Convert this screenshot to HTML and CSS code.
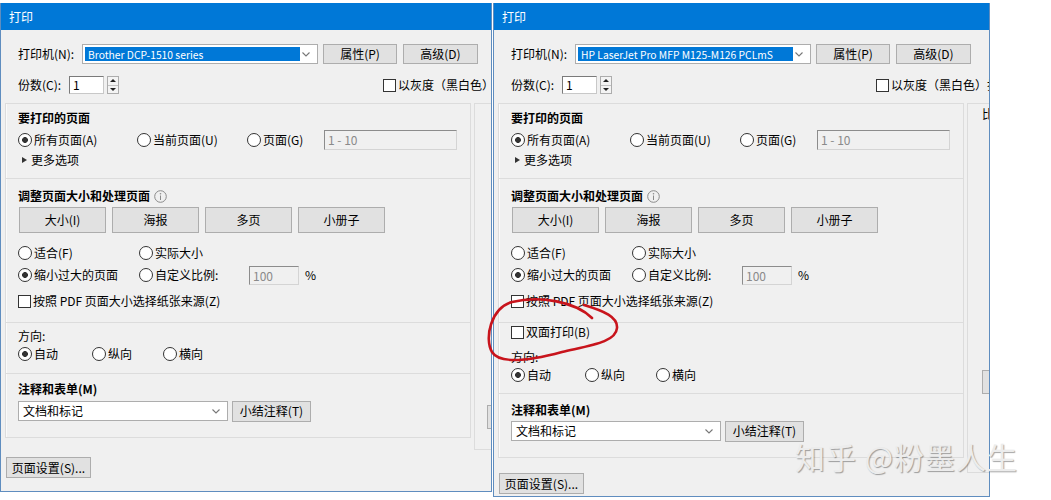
FILE: index.html
```html
<!doctype html>
<html lang="zh-CN">
  <head>
    <meta charset="UTF-8" />
    <meta name="viewport" content="width=device-width, initial-scale=1.0" />
    <title>打印</title>
    <link rel="stylesheet" href="styles.css">
  </head>
  <body>
    <div class="screen">
      <!-- 第一个打印对话框 -->
      <section class="dialog dialog-a">
        <header class="titlebar">打印</header>

        <div class="printer-row">
          <span class="lbl lbl-printer">打印机(N):</span>
          <div class="select select-printer">
            <span class="selected">Brother DCP-1510 series</span>
            <svg class="chev" width="8" height="5" viewBox="0 0 8 5"><polyline points="0.5,0.5 4,4 7.5,0.5" /></svg>
          </div>
          <button class="btn btn-prop">属性(P)</button>
          <button class="btn btn-adv">高级(D)</button>
        </div>

        <div class="copies-row">
          <span class="lbl lbl-copies">份数(C):</span>
          <span class="num-input">1</span>
          <span class="spin"><i class="up"></i><i class="down"></i></span>
          <span class="check gray-check"><b class="box"></b>以灰度（黑白色）打</span>
        </div>

        <div class="panels">
          <div class="sections">
            <div class="group g-pages">
              <div class="heading">要打印的页面</div>
              <div class="row">
                <span class="radio on w119">所有页面(A)</span>
                <span class="radio w110">当前页面(U)</span>
                <span class="radio w77">页面(G)</span>
                <span class="field off range">1 - 10</span>
              </div>
              <div class="row more">更多选项</div>
            </div>

            <div class="group g-size">
              <div class="heading">调整页面大小和处理页面
                <svg class="info" width="13" height="13" viewBox="0 0 13 13"><circle cx="6.5" cy="6.5" r="5.8" /><line x1="6.5" y1="5.5" x2="6.5" y2="10" /><circle class="dot" cx="6.5" cy="3.7" r="0.8" /></svg>
              </div>
              <div class="tabs">
                <button class="btn tab">大小(I)</button>
                <button class="btn tab">海报</button>
                <button class="btn tab">多页</button>
                <button class="btn tab">小册子</button>
              </div>
              <div class="row r-fit">
                <span class="radio w121">适合(F)</span>
                <span class="radio">实际大小</span>
              </div>
              <div class="row r-shrink">
                <span class="radio on w121">缩小过大的页面</span>
                <span class="radio w110">自定义比例:</span>
                <span class="field off scale">100</span>
                <span class="pct">%</span>
              </div>
              <div class="row r-source">
                <span class="check"><b class="box"></b>按照 PDF 页面大小选择纸张来源(Z)</span>
              </div>
            </div>

            <div class="group g-orient">
              <div class="line">方向:</div>
              <div class="line">
                <span class="radio on w74">自动</span>
                <span class="radio w71">纵向</span>
                <span class="radio">横向</span>
              </div>
            </div>

            <div class="group g-notes">
              <div class="heading">注释和表单(M)</div>
              <div class="row notes-row">
                <div class="select select-notes">
                  <span>文档和标记</span>
                  <svg class="chev" width="8" height="5" viewBox="0 0 8 5"><polyline points="0.5,0.5 4,4 7.5,0.5" /></svg>
                </div>
                <button class="btn btn-sum">小结注释(T)</button>
              </div>
            </div>
          </div>

          <div class="preview">
            <span class="preview-btn"></span>
          </div>
        </div>

        <div class="footer">
          <button class="btn btn-setup">页面设置(S)...</button>
        </div>
      </section>

      <!-- 第二个打印对话框，多了双面打印 -->
      <section class="dialog dialog-b">
        <header class="titlebar">打印</header>

        <div class="printer-row">
          <span class="lbl lbl-printer">打印机(N):</span>
          <div class="select select-printer">
            <span class="selected">HP LaserJet Pro MFP M125-M126 PCLmS</span>
            <svg class="chev" width="8" height="5" viewBox="0 0 8 5"><polyline points="0.5,0.5 4,4 7.5,0.5" /></svg>
          </div>
          <button class="btn btn-prop">属性(P)</button>
          <button class="btn btn-adv">高级(D)</button>
        </div>

        <div class="copies-row">
          <span class="lbl lbl-copies">份数(C):</span>
          <span class="num-input">1</span>
          <span class="spin"><i class="up"></i><i class="down"></i></span>
          <span class="check gray-check"><b class="box"></b>以灰度（黑白色）打印(Y)</span>
        </div>

        <div class="panels">
          <div class="sections">
            <div class="group g-pages">
              <div class="heading">要打印的页面</div>
              <div class="row">
                <span class="radio on w119">所有页面(A)</span>
                <span class="radio w110">当前页面(U)</span>
                <span class="radio w77">页面(G)</span>
                <span class="field off range">1 - 10</span>
              </div>
              <div class="row more">更多选项</div>
            </div>

            <div class="group g-size">
              <div class="heading">调整页面大小和处理页面
                <svg class="info" width="13" height="13" viewBox="0 0 13 13"><circle cx="6.5" cy="6.5" r="5.8" /><line x1="6.5" y1="5.5" x2="6.5" y2="10" /><circle class="dot" cx="6.5" cy="3.7" r="0.8" /></svg>
              </div>
              <div class="tabs">
                <button class="btn tab">大小(I)</button>
                <button class="btn tab">海报</button>
                <button class="btn tab">多页</button>
                <button class="btn tab">小册子</button>
              </div>
              <div class="row r-fit">
                <span class="radio w121">适合(F)</span>
                <span class="radio">实际大小</span>
              </div>
              <div class="row r-shrink">
                <span class="radio on w121">缩小过大的页面</span>
                <span class="radio w110">自定义比例:</span>
                <span class="field off scale">100</span>
                <span class="pct">%</span>
              </div>
              <div class="row r-source">
                <span class="check"><b class="box"></b>按照 PDF 页面大小选择纸张来源(Z)</span>
              </div>
            </div>

            <div class="group g-orient">
              <div class="line"><span class="check"><b class="box"></b>双面打印(B)</span></div>
              <div class="line dir">方向:</div>
              <div class="line">
                <span class="radio on w74">自动</span>
                <span class="radio w71">纵向</span>
                <span class="radio">横向</span>
              </div>
            </div>

            <div class="group g-notes">
              <div class="heading">注释和表单(M)</div>
              <div class="row notes-row">
                <div class="select select-notes">
                  <span>文档和标记</span>
                  <svg class="chev" width="8" height="5" viewBox="0 0 8 5"><polyline points="0.5,0.5 4,4 7.5,0.5" /></svg>
                </div>
                <button class="btn btn-sum">小结注释(T)</button>
              </div>
            </div>
          </div>

          <div class="preview">
            <span class="preview-label">比例</span>
            <span class="preview-btn"></span>
          </div>
        </div>

        <div class="footer">
          <button class="btn btn-setup">页面设置(S)...</button>
        </div>
      </section>

      <!-- 手绘的红圈 -->
      <svg class="ring" width="150" height="80" viewBox="480 290 150 80">
        <path d="M 592 318 C 576 302, 540 295, 512 302 C 491 308, 484 338, 492 352 C 500 365, 532 360, 562 352 C 592 345, 616 342, 617 328 C 618 317, 604 311, 584 305" />
      </svg>

      <div class="watermark">知乎 @粉墨人生</div>
    </div>
  </body>
</html>
```

FILE: styles.css
```css
* {
  box-sizing: border-box;
}

body {
  margin: 0;
  background: #fff;
  color: #000;
  font: 12px/20px "Noto Sans CJK SC", "Microsoft YaHei", sans-serif;
}

.screen {
  position: relative;
  display: flex;
  align-items: flex-start;
  height: 500px;
  padding-top: 3px;
  overflow: hidden;
}

/* ---- ventana ---- */
.dialog {
  display: flex;
  flex-direction: column;
  flex: none;
  background: #f0f0f0;
  border: 1px solid #5f8dbf;
  border-top: 0;
  overflow: hidden;
}
.dialog-a {
  width: 492px;
  height: 489px;
}
.dialog-b {
  width: 497px;
  height: 494px;
  margin-left: 1px;
}

.titlebar {
  flex: none;
  height: 27px;
  padding-left: 8px;
  background: #0078d7;
  color: #fff;
  line-height: 27px;
}

/* ---- fila de impresora ---- */
.printer-row,
.copies-row {
  display: flex;
  align-items: center;
  flex: none;
  width: 700px;
  padding-left: 17px;
  white-space: nowrap;
}
.printer-row {
  height: 20px;
  margin-top: 14px;
}
.copies-row {
  height: 18px;
  margin-top: 12px;
}

.lbl {
  flex: none;
  white-space: nowrap;
}
.lbl-printer { width: 64px; }
.lbl-copies { width: 51px; line-height: 18px; }

.btn {
  flex: none;
  height: 20px;
  padding: 0;
  background: #e1e1e1;
  border: 1px solid #adadad;
  color: #000;
  font: inherit;
  line-height: 18px;
  text-align: center;
}
.btn-prop { width: 74px; margin-left: 5px; }
.btn-adv { width: 75px; margin-left: 6px; }

.select {
  display: flex;
  align-items: center;
  flex: none;
  height: 20px;
  background: #fff;
  border: 1px solid #adadad;
}
.select-printer {
  width: 236px;
  padding: 2px;
}
.selected {
  width: 215px;
  height: 100%;
  padding-left: 3px;
  background: #0078d7;
  color: #fff;
  font-size: 10.3px;
  line-height: 15px;
  white-space: nowrap;
  overflow: hidden;
}
.chev {
  margin-left: auto;
  margin-right: 5px;
  fill: none;
  stroke: #777;
  stroke-width: 1.1;
}

.num-input {
  flex: none;
  width: 35px;
  height: 18px;
  padding-left: 3px;
  background: #fff;
  border: 1px solid #c8c8c8;
  border-top-color: #7a7a7a;
  border-left-color: #7a7a7a;
  line-height: 16px;
}

.spin {
  display: flex;
  flex-direction: column;
  flex: none;
  width: 12px;
  height: 18px;
  margin-left: 3px;
  border: 1px solid #adadad;
  background: #f4f4f4;
}
.spin i {
  display: flex;
  justify-content: center;
  align-items: center;
  flex: 1;
}
.spin i + i {
  border-top: 1px solid #c4c4c4;
}
.spin .up::before,
.spin .down::before {
  content: "";
  border-left: 3px solid transparent;
  border-right: 3px solid transparent;
}
.spin .up::before { border-bottom: 3px solid #222; }
.spin .down::before { border-top: 3px solid #222; }

.gray-check {
  margin-left: 264px;
}

/* ---- controles ---- */
.radio,
.check {
  display: inline-flex;
  align-items: center;
  flex: none;
  white-space: nowrap;
}
.radio::before {
  content: "";
  flex: none;
  width: 12px;
  height: 12px;
  margin-right: 2px;
  border: 1px solid #333;
  border-radius: 50%;
  background: #fff;
}
.radio.on::before {
  background: radial-gradient(circle, #333 0 2.6px, #fff 3.2px);
}
.check .box {
  flex: none;
  width: 13px;
  height: 13px;
  margin-right: 2px;
  border: 1px solid #333;
  background: #fff;
}

.w119 { width: 119px; }
.w110 { width: 110px; }
.w77 { width: 77px; }
.w121 { width: 121px; }
.w74 { width: 74px; }
.w71 { width: 71px; }

.field {
  flex: none;
  padding-left: 3px;
  border: 1px solid #d4d4d4;
  border-top-color: #8c8c8c;
  border-left-color: #8c8c8c;
}
.field.off {
  background: #f0f0f0;
  color: #8a8a8a;
}
.range {
  width: 133px;
  height: 20px;
  line-height: 18px;
}
.scale {
  width: 50px;
  height: 19px;
  line-height: 17px;
}
.pct {
  margin-left: 6px;
}

/* ---- paneles ---- */
.panels {
  display: flex;
  align-items: flex-start;
  flex: none;
  margin: 9px 0 0 4px;
}

.sections {
  flex: none;
  width: 466px;
  border: 1px solid #dcdcdc;
  border-bottom: 0;
  box-shadow: inset 1px 0 #fafafa;
}

.group {
  padding-left: 12px;
  border-bottom: 1px solid #dcdcdc;
}
.heading {
  display: flex;
  align-items: center;
  font-weight: bold;
}
.row {
  display: flex;
  align-items: center;
  height: 20px;
}

.g-pages { padding-top: 4px; padding-bottom: 8px; }
.g-pages .row:nth-child(2) { margin-top: 2px; }

.more::before {
  content: "";
  margin: 0 4px 0 4px;
  border-left: 5px solid #333;
  border-top: 3.5px solid transparent;
  border-bottom: 3.5px solid transparent;
}

.g-size { padding-top: 7px; padding-bottom: 11px; }
.info {
  margin-left: 4px;
  fill: none;
  stroke: #8a8a8a;
  stroke-width: 1;
}
.info .dot {
  fill: #8a8a8a;
  stroke: none;
}
.tabs {
  display: flex;
  gap: 6px;
  margin: 1px 0 0 1px;
}
.tab {
  width: 87px;
  height: 26px;
  line-height: 24px;
}
.r-fit { margin-top: 10px; }
.r-shrink { margin-top: 2px; }
.r-source { margin-top: 6px; }

.g-orient { padding-top: 4px; padding-bottom: 10px; }
.line {
  display: flex;
  align-items: center;
  height: 18px;
}
.dialog-b .g-orient { padding-top: 0; padding-bottom: 9px; }
.dialog-b .dir { margin-top: 7px; }

.g-notes { padding-top: 5px; padding-bottom: 16px; }
.notes-row { margin-top: 2px; }
.dialog-b .g-notes { padding-top: 6px; }
.dialog-b .notes-row { margin-top: 1px; }

.select-notes {
  width: 210px;
  padding-left: 4px;
}
.select-notes .chev { margin-right: 7px; }
.btn-sum {
  width: 79px;
  height: 21px;
  margin-left: 4px;
}

.preview {
  display: flex;
  flex-direction: column;
  flex: none;
  width: 60px;
  margin-left: 3px;
  border: 1px solid #dcdcdc;
}
.dialog-a .preview { height: 347px; }
.dialog-b .preview { height: 370px; }

.preview-label {
  margin-left: 14px;
  white-space: nowrap;
  line-height: 20px;
}
.preview-btn {
  width: 20px;
  height: 24px;
  background: #e1e1e1;
  border: 1px solid #adadad;
}
.dialog-a .preview-btn { margin: 301px 0 0 12px; }
.dialog-b .preview-btn { margin: 246px 0 0 14px; }

.footer {
  margin-top: auto;
  padding: 0 0 13px 5px;
}
.btn-setup {
  width: 85px;
  height: 21px;
}

/* ---- encima de todo ---- */
.ring {
  position: absolute;
  left: 480px;
  top: 290px;
  fill: none;
  stroke: #c8141c;
  stroke-width: 2.6;
  stroke-linecap: round;
}

.watermark {
  position: absolute;
  left: 795px;
  top: 437px;
  color: #ececec;
  font-size: 30px;
  line-height: 38px;
  letter-spacing: 1px;
  white-space: nowrap;
  text-shadow: 1px 1px 1px rgba(0, 0, 0, 0.35);
}
```
